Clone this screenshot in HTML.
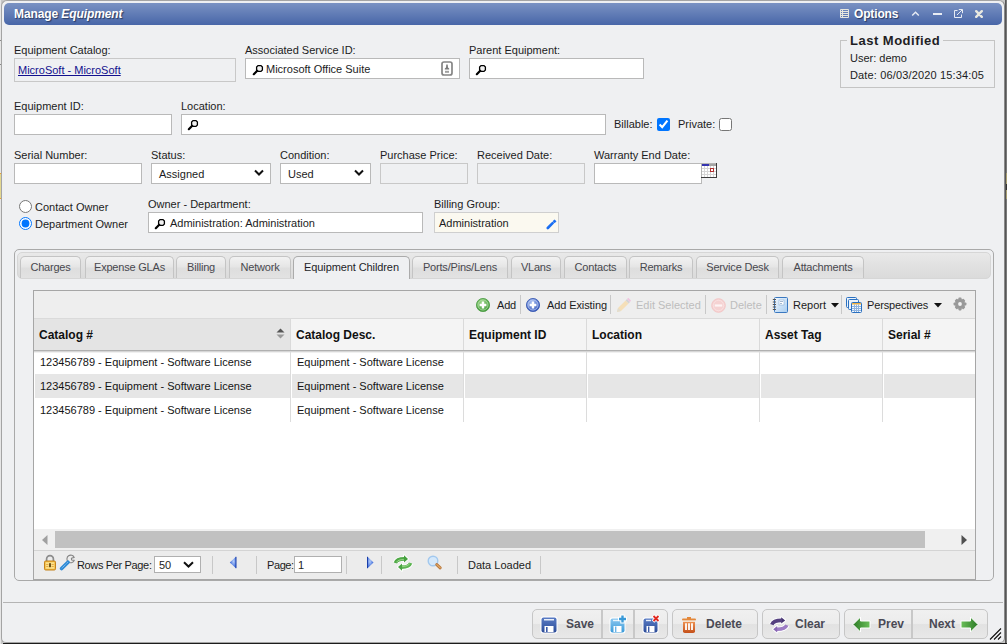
<!DOCTYPE html>
<html><head><meta charset="utf-8">
<style>
*{box-sizing:border-box;margin:0;padding:0}
html,body{width:1007px;height:644px;overflow:hidden;background:#c8c8c8;font-family:"Liberation Sans",sans-serif;font-size:11px;color:#222}
.a{position:absolute}
.t{position:absolute;white-space:nowrap;line-height:13px;font-size:11px;color:#1c1c22}
#win{position:absolute;left:1px;top:0;width:1004px;height:643px;background:#eff0f2;border:1px solid #a4a4a4;border-right-color:#8a8a8a;border-radius:6px 6px 5px 5px}
#hdr{position:absolute;left:4px;top:3px;width:998px;height:22px;border-radius:5px;background:linear-gradient(#7a92c3,#4866a8)}
.inp{position:absolute;background:#fff;border:1px solid #b9b9b9}
.dis{position:absolute;background:#eff0f2;border:1px solid #c8c8c8}
.lbl{position:absolute;white-space:nowrap;font-size:11px;line-height:13px;color:#1c1c22}
.tab{position:absolute;top:256px;height:22px;border:1px solid #c4c4c4;border-bottom:none;border-radius:5px 5px 0 0;background:linear-gradient(#f2f2f2,#e6e6e6 45%,#dedede 55%,#e2e2e2);color:#48484e;font-size:11px;line-height:13px;text-align:center;padding-top:4px;white-space:nowrap;letter-spacing:-0.2px}
.tab.act{background:#eff0f2;border-color:#ababab;color:#1e1e28;height:23px;z-index:2;letter-spacing:-0.1px}
.col{position:absolute;top:319px;height:31px;border-left:1px solid #dadada}
.hd{position:absolute;top:328px;font-weight:bold;font-size:12px;line-height:14px;color:#111;white-space:nowrap}
.cell{position:absolute;font-size:11px;line-height:13px;color:#141414;white-space:nowrap}
.sep{position:absolute;width:1px;background:#c8c8c8}
.btn{position:absolute;top:609px;height:30px;border:1px solid #c6c6c6;border-radius:5px;background:linear-gradient(#f0f0f0,#ececec 48%,#e2e2e2 52%,#e8e8e8)}
.bt{position:absolute;top:617px;font-weight:bold;font-size:12px;line-height:14px;color:#4a4a55;white-space:nowrap}
</style></head><body>
<!-- right dark outside strip -->
<div class="a" style="left:1005px;top:0;width:1px;height:644px;background:#565656"></div><div class="a" style="left:1006px;top:0;width:1px;height:644px;background:#7a7a7a"></div><div class="a" style="left:1006px;top:173px;width:1px;height:26px;background:#a89e70"></div><div class="a" style="left:1006px;top:184px;width:1px;height:6px;background:#333"></div>
<div class="a" style="left:0;top:0;width:1px;height:644px;background:#e6e6e6"></div><div class="a" style="left:0;top:173px;width:1px;height:26px;background:#e4d890"></div><div class="a" style="left:0;top:173px;width:1px;height:1px;background:#f0a030"></div><div class="a" style="left:0;top:198px;width:1px;height:1px;background:#f0a030"></div><div class="a" style="left:0;top:40px;width:1px;height:1px;background:#888"></div><div class="a" style="left:0;top:64px;width:1px;height:1px;background:#888"></div>
<div id="win">
</div>
<div class="a" style="left:3px;top:643px;width:1004px;height:1px;background:#1c1c1c"></div>
<div id="hdr"></div>
<div class="a" style="left:14px;top:6px;font-size:12px;font-weight:bold;color:#fff;line-height:16px;text-shadow:1px 1px 1px #2a3a60;white-space:nowrap;letter-spacing:-0.1px">Manage <i>Equipment</i></div>

<!-- header right icons -->
<svg class="a" style="left:840px;top:9px" width="9" height="9" viewBox="0 0 9 9"><path d="M0.5 0.5H8.5V8.5H0.5Z M0.5 2.5H8.5M0.5 4.5H8.5M0.5 6.5H8.5M2.5 0.5V8.5" fill="none" stroke="#e6e6de" stroke-width="1"/></svg>
<div class="a" style="left:854px;top:6px;font-size:12px;font-weight:bold;color:#fff;line-height:16px;text-shadow:1px 1px 1px #2a3a60;letter-spacing:-0.15px">Options</div>
<svg class="a" style="left:911px;top:10px" width="9" height="7" viewBox="0 0 9 7"><path d="M1.2 5.5L4.5 2.2L7.8 5.5" fill="none" stroke="#e8ecf4" stroke-width="1.4"/></svg>
<div class="a" style="left:933px;top:13px;width:9px;height:2px;background:#e8ecf4"></div>
<svg class="a" style="left:954px;top:9px" width="9" height="9" viewBox="0 0 9 9"><path d="M3.5 1.5H0.5V8.5H7.5V5.5" fill="none" stroke="#e8ecf4" stroke-width="1"/><path d="M3 6L8 1M4.8 0.5H8.5V4.2" fill="none" stroke="#e8ecf4" stroke-width="1"/></svg>
<svg class="a" style="left:975px;top:10px" width="8" height="8" viewBox="0 0 8 8"><path d="M1.2 1.2L6.8 6.8M6.8 1.2L1.2 6.8" stroke="#e8e8e0" stroke-width="2.4" stroke-linecap="round"/></svg>

<!-- Row 1 -->
<div class="lbl" style="left:14px;top:44px">Equipment Catalog:</div>
<div class="dis" style="left:14px;top:58px;width:222px;height:24px"></div>
<div class="lbl" style="left:18px;top:64px;color:#12108e;text-decoration:underline">MicroSoft - MicroSoft</div>
<div class="lbl" style="left:245px;top:44px">Associated Service ID:</div>
<div class="inp" style="left:245px;top:58px;width:215px;height:21px"></div>
<div class="lbl" style="left:469px;top:44px">Parent Equipment:</div>
<div class="inp" style="left:469px;top:58px;width:175px;height:21px"></div>

<!-- Last Modified -->
<div class="a" style="left:840px;top:40px;width:155px;height:48px;border:1px solid #c4c4c4"></div>
<div class="a" style="left:847px;top:33px;width:96px;height:14px;background:#eff0f2"></div>
<div class="a" style="left:850px;top:33px;font-size:13px;font-weight:bold;line-height:15px;color:#1e1e24;white-space:nowrap;letter-spacing:0.5px">Last Modified</div>
<div class="lbl" style="left:850px;top:52px">User: demo</div>
<div class="lbl" style="left:850px;top:69px;letter-spacing:0.15px">Date: 06/03/2020 15:34:05</div>

<!-- Row 2 -->
<div class="lbl" style="left:14px;top:100px">Equipment ID:</div>
<div class="inp" style="left:14px;top:114px;width:158px;height:21px"></div>
<div class="lbl" style="left:181px;top:100px">Location:</div>
<div class="inp" style="left:181px;top:114px;width:425px;height:21px"></div>
<div class="lbl" style="left:614px;top:118px">Billable:</div>
<div class="lbl" style="left:678px;top:118px">Private:</div>

<!-- Row 3 -->
<div class="lbl" style="left:14px;top:149px">Serial Number:</div>
<div class="inp" style="left:14px;top:163px;width:128px;height:21px"></div>
<div class="lbl" style="left:151px;top:149px">Status:</div>
<div class="inp" style="left:151px;top:163px;width:120px;height:21px"></div>
<div class="lbl" style="left:159px;top:168px">Assigned</div>
<div class="lbl" style="left:280px;top:149px">Condition:</div>
<div class="inp" style="left:280px;top:163px;width:91px;height:21px"></div>
<div class="lbl" style="left:288px;top:168px">Used</div>
<div class="lbl" style="left:380px;top:149px">Purchase Price:</div>
<div class="dis" style="left:380px;top:163px;width:88px;height:21px"></div>
<div class="lbl" style="left:477px;top:149px">Received Date:</div>
<div class="dis" style="left:477px;top:163px;width:108px;height:21px"></div>
<div class="lbl" style="left:594px;top:149px">Warranty End Date:</div>
<div class="inp" style="left:594px;top:163px;width:108px;height:21px"></div>

<!-- Row 4 -->
<div class="lbl" style="left:35px;top:201px">Contact Owner</div>
<div class="lbl" style="left:35px;top:218px">Department Owner</div>
<div class="lbl" style="left:148px;top:198px">Owner - Department:</div>
<div class="inp" style="left:148px;top:212px;width:275px;height:21px"></div>
<div class="lbl" style="left:170px;top:217px">Administration: Administration</div>
<div class="lbl" style="left:434px;top:198px">Billing Group:</div>
<div class="a" style="left:434px;top:212px;width:125px;height:21px;background:#fbf9f0;border:1px solid #cfcfcf"></div>
<div class="lbl" style="left:439px;top:217px">Administration</div>


<!-- form icons -->
<svg class="a" style="left:252px;top:61px" width="12" height="15" viewBox="0 0 12 15"><path d="M6 4.6H9L10.4 6V9L9 10.4H6L4.6 9V6Z" fill="#f2f2f2" stroke="#000" stroke-width="1.3"/><path d="M5.2 9.8L1.8 13.2" stroke="#000" stroke-width="2.2" stroke-linecap="round"/></svg>
<div class="lbl" style="left:266px;top:63px;color:#1c1c24">Microsoft Office Suite</div>
<svg class="a" style="left:441px;top:61px" width="12" height="15" viewBox="0 0 12 15"><rect x="1" y="1" width="10" height="13" rx="2" fill="#fff" stroke="#858585" stroke-width="1.7"/><path d="M5.3 3.6H6.7L7 6.5L8.2 7.6V8.4H3.8V7.6L5 6.5Z" fill="#7a7a7a"/><rect x="4" y="9.8" width="4" height="2" fill="#a0a0a0"/></svg>
<svg class="a" style="left:475px;top:61px" width="12" height="15" viewBox="0 0 12 15"><path d="M6 4.6H9L10.4 6V9L9 10.4H6L4.6 9V6Z" fill="#f2f2f2" stroke="#000" stroke-width="1.3"/><path d="M5.2 9.8L1.8 13.2" stroke="#000" stroke-width="2.2" stroke-linecap="round"/></svg>
<svg class="a" style="left:187px;top:116px" width="12" height="15" viewBox="0 0 12 15"><path d="M6 4.6H9L10.4 6V9L9 10.4H6L4.6 9V6Z" fill="#f2f2f2" stroke="#000" stroke-width="1.3"/><path d="M5.2 9.8L1.8 13.2" stroke="#000" stroke-width="2.2" stroke-linecap="round"/></svg>
<svg class="a" style="left:154px;top:215px" width="12" height="15" viewBox="0 0 12 15"><path d="M6 4.6H9L10.4 6V9L9 10.4H6L4.6 9V6Z" fill="#f2f2f2" stroke="#000" stroke-width="1.3"/><path d="M5.2 9.8L1.8 13.2" stroke="#000" stroke-width="2.2" stroke-linecap="round"/></svg>
<input type="checkbox" checked class="a" style="left:657px;top:118px;width:13px;height:13px;margin:0">
<input type="checkbox" class="a" style="left:719px;top:118px;width:13px;height:13px;margin:0">
<input type="radio" name="r" class="a" style="left:19px;top:200px;width:13px;height:13px;margin:0">
<input type="radio" name="r" checked class="a" style="left:19px;top:217px;width:13px;height:13px;margin:0">
<svg class="a" style="left:254px;top:169px" width="10" height="8" viewBox="0 0 10 8"><path d="M1 1.5L5 5.5L9 1.5" fill="none" stroke="#111" stroke-width="2"/></svg>
<svg class="a" style="left:354px;top:169px" width="10" height="8" viewBox="0 0 10 8"><path d="M1 1.5L5 5.5L9 1.5" fill="none" stroke="#111" stroke-width="2"/></svg>
<svg class="a" style="left:701px;top:163px" width="16" height="15" viewBox="0 0 16 15" shape-rendering="crispEdges"><rect x="0" y="0" width="16" height="15" fill="#fff"/><path d="M3.5 3V14M6.5 3V14M9.5 3V14M12.5 3V14M1 5.5H15M1 8.5H15M1 11.5H15" stroke="#d6d6d6" stroke-width="1"/><rect x="0" y="0" width="16" height="1" fill="#b4b4b4"/><rect x="0" y="0" width="1" height="15" fill="#b4b4b4"/><rect x="1" y="1" width="7" height="2" fill="#3434b0"/><rect x="8" y="1" width="7" height="2" fill="#a4a4a4"/><path d="M9.5 5.5H12.5V8.5H9.5Z" fill="#fff" stroke="#b03030" stroke-width="1"/><rect x="15" y="0" width="1" height="15" fill="#3c3c3c"/><rect x="0" y="14" width="16" height="1" fill="#3c3c3c"/></svg>
<svg class="a" style="left:546px;top:219px" width="11" height="11" viewBox="0 0 11 11"><path d="M1.8 9L6.6 4.2" stroke="#1a6ef2" stroke-width="2.6" stroke-linecap="round"/><path d="M8.5 0.4L10.5 2.3L8.6 4.2L6.6 2.3Z" fill="#1a6ef2"/></svg>

<!-- tab panel -->
<div class="a" style="left:14px;top:249px;width:980px;height:332px;border:1px solid #a9a9a9;border-radius:5px"></div>
<div class="a" style="left:17px;top:252px;width:974px;height:27px;border:1px solid #d6d6d6;border-radius:5px;background:linear-gradient(#e9e9e9,#e1e1e1 50%,#dbdbdb)"></div>


<!-- tabs -->
<div class="tab" style="left:20px;width:61px">Charges</div>
<div class="tab" style="left:85px;width:89px">Expense GLAs</div>
<div class="tab" style="left:176px;width:50px">Billing</div>
<div class="tab" style="left:229px;width:62px">Network</div>
<div class="tab act" style="left:293px;width:117px">Equipment Children</div>
<div class="tab" style="left:412px;width:96px">Ports/Pins/Lens</div>
<div class="tab" style="left:511px;width:50px">VLans</div>
<div class="tab" style="left:564px;width:63px">Contacts</div>
<div class="tab" style="left:629px;width:64px">Remarks</div>
<div class="tab" style="left:696px;width:83px">Service Desk</div>
<div class="tab" style="left:782px;width:82px">Attachments</div>

<!-- grid -->
<div class="a" style="left:33px;top:290px;width:943px;height:290px;border:1px solid #a6a6a6;background:#fff"></div>
<div class="a" style="left:34px;top:291px;width:941px;height:27px;background:#eeeeee"></div>
<div class="a" style="left:34px;top:318px;width:941px;height:1px;background:#dadada"></div>
<div class="a" style="left:34px;top:319px;width:941px;height:31px;background:#f4f4f4"></div>
<div class="a" style="left:34px;top:319px;width:256px;height:31px;background:#e4e4e4"></div>
<div class="a" style="left:34px;top:350px;width:941px;height:1px;background:#b0b0b0"></div><div class="a" style="left:34px;top:351px;width:941px;height:1px;background:#d6d6d6"></div><div class="a" style="left:34px;top:352px;width:941px;height:1px;background:#f0f0f0"></div>
<div class="a" style="left:35px;top:374px;width:940px;height:24px;background:#e6e6e6"></div>

<!-- scroll + paging -->
<div class="a" style="left:34px;top:529px;width:941px;height:21px;background:#f0f0f0"></div>
<div class="a" style="left:55px;top:531px;width:870px;height:17px;background:#c1c1c1"></div>
<div class="a" style="left:34px;top:550px;width:941px;height:1px;background:#d4d4d4"></div>
<div class="a" style="left:34px;top:551px;width:941px;height:28px;background:#ececec"></div>


<!-- grid content -->
<div class="a" style="left:290px;top:319px;width:1px;height:31px;background:#dadada"></div>
<div class="a" style="left:463px;top:319px;width:1px;height:31px;background:#dadada"></div>
<div class="a" style="left:586px;top:319px;width:1px;height:31px;background:#dadada"></div>
<div class="a" style="left:759px;top:319px;width:1px;height:31px;background:#dadada"></div>
<div class="a" style="left:882px;top:319px;width:1px;height:31px;background:#dadada"></div>
<div class="a" style="left:290px;top:352px;width:1px;height:70px;background:#dcdcdc"></div>
<div class="a" style="left:463px;top:352px;width:1px;height:70px;background:#dcdcdc"></div>
<div class="a" style="left:586px;top:352px;width:1px;height:70px;background:#dcdcdc"></div>
<div class="a" style="left:759px;top:352px;width:1px;height:70px;background:#dcdcdc"></div>
<div class="a" style="left:882px;top:352px;width:1px;height:70px;background:#dcdcdc"></div>
<div class="a" style="left:291px;top:374px;width:1px;height:24px;background:#fff"></div>
<div class="a" style="left:464px;top:374px;width:1px;height:24px;background:#fff"></div>
<div class="a" style="left:587px;top:374px;width:1px;height:24px;background:#fff"></div>
<div class="a" style="left:760px;top:374px;width:1px;height:24px;background:#fff"></div>
<div class="a" style="left:883px;top:374px;width:1px;height:24px;background:#fff"></div>
<div class="hd" style="left:39px">Catalog #</div>
<div class="hd" style="left:296px">Catalog Desc.</div>
<div class="hd" style="left:469px">Equipment ID</div>
<div class="hd" style="left:592px">Location</div>
<div class="hd" style="left:765px">Asset Tag</div>
<div class="hd" style="left:888px">Serial #</div>
<svg class="a" style="left:276px;top:328px" width="9" height="11" viewBox="0 0 9 11"><path d="M4.5 0.5L8.5 4.5H0.5Z" fill="#555"/><path d="M4.5 10.5L8.5 6.5H0.5Z" fill="#999"/></svg>
<div class="cell" style="left:40px;top:356px">123456789 - Equipment - Software License</div>
<div class="cell" style="left:297px;top:356px">Equipment - Software License</div>
<div class="cell" style="left:40px;top:380px">123456789 - Equipment - Software License</div>
<div class="cell" style="left:297px;top:380px">Equipment - Software License</div>
<div class="cell" style="left:40px;top:404px">123456789 - Equipment - Software License</div>
<div class="cell" style="left:297px;top:404px">Equipment - Software License</div>

<!-- toolbar -->
<svg class="a" style="left:476px;top:298px" width="14" height="14" viewBox="0 0 14 14"><defs><radialGradient id="gg" cx="0.4" cy="0.3" r="0.75"><stop offset="0" stop-color="#9ad486"/><stop offset="1" stop-color="#3c9636"/></radialGradient></defs><circle cx="7" cy="7" r="6.6" fill="url(#gg)" stroke="#4a9c42" stroke-width="0.8"/><circle cx="7" cy="7" r="5" fill="none" stroke="#c8ecbc" stroke-opacity="0.7" stroke-width="0.9"/><path d="M7 3.6V10.4M3.6 7H10.4" stroke="#fff" stroke-width="2.4"/></svg>
<div class="t" style="left:497px;top:299px;letter-spacing:-0.2px">Add</div>
<div class="sep" style="left:520px;top:295px;height:19px"></div>
<svg class="a" style="left:526px;top:298px" width="14" height="14" viewBox="0 0 14 14"><defs><radialGradient id="bg" cx="0.4" cy="0.3" r="0.75"><stop offset="0" stop-color="#a4bcf0"/><stop offset="1" stop-color="#2f52b8"/></radialGradient></defs><circle cx="7" cy="7" r="6.6" fill="url(#bg)" stroke="#3556b0" stroke-width="0.8"/><circle cx="7" cy="7" r="5" fill="none" stroke="#d4e0fa" stroke-opacity="0.7" stroke-width="0.9"/><path d="M7 3.6V10.4M3.6 7H10.4" stroke="#fff" stroke-width="2.4"/></svg>
<div class="t" style="left:547px;top:299px;letter-spacing:-0.1px">Add Existing</div>
<div class="sep" style="left:610px;top:295px;height:19px"></div>
<svg class="a" style="left:616px;top:297px" width="15" height="16" viewBox="0 0 15 16"><path d="M1 15L2 11L9.6 3.4L12.6 6.4L5 14Z" fill="#f5dfb8"/><path d="M9.6 3.4L11 2L14 5L12.6 6.4Z" fill="#d4d4d4"/><path d="M11 2L12.3 0.7L15 3.4L14 5Z" fill="#f0c4e0"/><path d="M1 15L2 11L5 14Z" fill="#e0ddd0"/></svg>
<div class="t" style="left:636px;top:299px;color:#bdbdbd">Edit Selected</div>
<div class="sep" style="left:705px;top:295px;height:19px"></div>
<svg class="a" style="left:711px;top:298px" width="15" height="15" viewBox="0 0 15 15"><circle cx="7.5" cy="7.5" r="6.8" fill="#f5d2d2" stroke="#f3c6c6" stroke-width="1"/><circle cx="7.5" cy="7.5" r="5.2" fill="none" stroke="#f9e2e2" stroke-width="0.8"/><rect x="3.8" y="6.4" width="7.4" height="2.2" fill="#fdf4f4"/></svg>
<div class="t" style="left:730px;top:299px;color:#bdbdbd">Delete</div>
<div class="sep" style="left:766px;top:295px;height:19px"></div>
<svg class="a" style="left:772px;top:297px" width="16" height="16" viewBox="0 0 16 16"><defs><linearGradient id="rg" x1="0" y1="0" x2="1" y2="1"><stop offset="0" stop-color="#f2f8fe"/><stop offset="1" stop-color="#a8cdf0"/></linearGradient></defs><rect x="2.5" y="0.5" width="13" height="15" rx="1" fill="url(#rg)" stroke="#3a78c0"/><rect x="7" y="3" width="5" height="5" fill="#fff" stroke="#8ab0d8" stroke-width="0.6"/><path d="M8 4.5h3M8 6.5h2" stroke="#6a8ab0" stroke-width="0.6"/><path d="M0.8 2.5h3.2M0.8 5h3.2M0.8 7.5h3.2M0.8 10h3.2M0.8 12.5h3.2" stroke="#555" stroke-width="1"/></svg>
<div class="t" style="left:793px;top:299px">Report</div>
<svg class="a" style="left:831px;top:303px" width="8" height="5" viewBox="0 0 8 5"><path d="M0 0H8L4 4.5Z" fill="#111"/></svg>
<div class="sep" style="left:841px;top:295px;height:19px"></div>
<svg class="a" style="left:846px;top:297px" width="16" height="16" viewBox="0 0 16 16"><rect x="0.5" y="0.5" width="10" height="10" rx="1" fill="#eaf2fb" stroke="#2a70c0"/><rect x="2.5" y="2.5" width="10" height="10" rx="1" fill="#eaf2fb" stroke="#2a70c0"/><rect x="5.5" y="5.5" width="10" height="10" rx="1" fill="#f4f8fd" stroke="#2a70c0"/><rect x="6" y="6" width="9" height="1.5" fill="#f0b040"/><path d="M6 9.5h9M6 11.5h9M6 13.5h9M8.5 7.5v7.5M10.5 7.5v7.5M12.5 7.5v7.5" stroke="#8fb4e0" stroke-width="1"/></svg>
<div class="t" style="left:867px;top:299px;letter-spacing:-0.15px">Perspectives</div>
<svg class="a" style="left:934px;top:303px" width="8" height="5" viewBox="0 0 8 5"><path d="M0 0H8L4 4.5Z" fill="#111"/></svg>
<svg class="a" style="left:953px;top:297px" width="14" height="14" viewBox="0 0 14 14"><g fill="#999"><circle cx="7" cy="7" r="4.9"/><rect x="5.4" y="0.6" width="3.2" height="12.8" rx="0.8"/><rect x="0.6" y="5.4" width="12.8" height="3.2" rx="0.8"/><rect x="5.4" y="0.9" width="3.2" height="12.2" rx="0.8" transform="rotate(45 7 7)"/><rect x="5.4" y="0.9" width="3.2" height="12.2" rx="0.8" transform="rotate(-45 7 7)"/></g><circle cx="7" cy="7" r="1.9" fill="#f2f2f2"/></svg>

<!-- scroll arrows -->
<svg class="a" style="left:42px;top:535px" width="6" height="10" viewBox="0 0 6 10"><path d="M5.5 0V10L0 5Z" fill="#a0a0a0"/></svg>
<svg class="a" style="left:961px;top:535px" width="6" height="10" viewBox="0 0 6 10"><path d="M0.5 0V10L6 5Z" fill="#505050"/></svg>

<!-- paging -->
<svg class="a" style="left:43px;top:554px" width="14" height="17" viewBox="0 0 14 17"><path d="M3.6 7.5V5A3.4 3.4 0 0 1 10.4 5V7.5" fill="none" stroke="#8c8c8c" stroke-width="1.7"/><rect x="1.5" y="7" width="11" height="9" rx="1.2" fill="#f2b838" stroke="#c4821a"/><rect x="2.6" y="8.2" width="8.8" height="6.6" fill="#fbe08a"/><path d="M3.2 10.5h2.2M8.6 10.5h2.2M3.2 12.5h2.2M8.6 12.5h2.2" stroke="#e4a43a" stroke-width="0.9"/><rect x="6.2" y="9.2" width="1.6" height="4" fill="#4a3200"/></svg>
<svg class="a" style="left:59px;top:554px" width="16" height="17" viewBox="0 0 16 17"><path d="M9 7.6A3.8 3.8 0 1 1 15.2 3.4L12.4 4.2L12.6 6L15.3 6.4A3.8 3.8 0 0 1 9 7.6Z" fill="#ececec" stroke="#858585" stroke-width="1.1" stroke-linejoin="round"/><path d="M2.6 14.6L9 8.2" stroke="#2e8ad6" stroke-width="3.6" stroke-linecap="round"/><path d="M2.8 14.2L8.6 8.4" stroke="#a8d8fa" stroke-width="0.9" stroke-dasharray="1 0.8"/></svg>
<div class="t" style="left:77px;top:559px;letter-spacing:-0.35px">Rows Per Page:</div>
<div class="inp" style="left:154px;top:556px;width:47px;height:17px;border-color:#b0b0b0"></div>
<div class="t" style="left:159px;top:559px">50</div>
<svg class="a" style="left:183px;top:561px" width="11" height="7" viewBox="0 0 11 7"><path d="M1 1.2L5.5 5.5L10 1.2" fill="none" stroke="#111" stroke-width="2"/></svg>
<div class="sep" style="left:212px;top:556px;height:18px"></div>
<svg class="a" style="left:229px;top:556px" width="8" height="13" viewBox="0 0 8 13"><defs><radialGradient id="tri" cx="0.6" cy="0.4" r="0.7"><stop offset="0" stop-color="#b4cdfa"/><stop offset="1" stop-color="#1c4ed0"/></radialGradient></defs><path d="M7 0.8V12.2L0.8 6.5Z" fill="url(#tri)"/><path d="M7 0.8V12.2" stroke="#1a3ea8" stroke-width="1"/></svg>
<div class="sep" style="left:256px;top:556px;height:18px"></div>
<div class="t" style="left:267px;top:559px;letter-spacing:-0.4px">Page:</div>
<div class="inp" style="left:294px;top:556px;width:48px;height:17px;border-color:#b0b0b0"></div>
<div class="t" style="left:298px;top:559px">1</div>
<div class="sep" style="left:346px;top:556px;height:18px"></div>
<svg class="a" style="left:366px;top:556px" width="8" height="13" viewBox="0 0 8 13"><defs><radialGradient id="tri2" cx="0.4" cy="0.4" r="0.7"><stop offset="0" stop-color="#b4cdfa"/><stop offset="1" stop-color="#1c4ed0"/></radialGradient></defs><path d="M1.5 0.8V12.2L7.5 6.5Z" fill="url(#tri2)"/><path d="M1.5 0.8V12.2" stroke="#1a3ea8" stroke-width="1"/></svg>
<div class="sep" style="left:381px;top:556px;height:18px"></div>
<svg class="a" style="left:393px;top:552px" width="20" height="20" viewBox="0 0 20 20"><defs><linearGradient id="rf" x1="0" y1="0" x2="0" y2="1"><stop offset="0" stop-color="#8ed27c"/><stop offset="1" stop-color="#3c9a38"/></linearGradient></defs><g stroke="#fff" stroke-linejoin="round"><path d="M2.4 11Q3.8 6.9 11.4 6.9" fill="none" stroke-width="5.4"/><path d="M11 3.2L15 6.9L11 10.6Z" fill="#fff" stroke-width="1.8"/><path d="M17.6 11Q16.2 15.1 8.6 15.1" fill="none" stroke-width="5.4"/><path d="M9 11.4L5 15.1L9 18.8Z" fill="#fff" stroke-width="1.8"/></g><path d="M2.4 11Q3.8 6.9 11.4 6.9" fill="none" stroke="#4fa846" stroke-width="3.6"/><path d="M11 3.2L15 6.9L11 10.6Z" fill="#45a03e"/><path d="M17.6 11Q16.2 15.1 8.6 15.1" fill="none" stroke="#5cb452" stroke-width="3.6"/><path d="M9 11.4L5 15.1L9 18.8Z" fill="#4aa444"/><path d="M3.6 10.2Q4.8 7.6 10.8 7.6" fill="none" stroke="#a4dc94" stroke-width="0.9"/><path d="M16.6 11.6Q15.6 14.2 9.2 14.4" fill="none" stroke="#a4dc94" stroke-width="0.9"/></svg>
<svg class="a" style="left:427px;top:555px" width="16" height="15" viewBox="0 0 16 15"><circle cx="6" cy="6" r="4.8" fill="#d4e8fb" stroke="#a2c8ee" stroke-width="1.4"/><path d="M9.8 9.6L13.2 12.8" stroke="#b8763a" stroke-width="3" stroke-linecap="round"/><path d="M9.8 9.6L13.2 12.8" stroke="#e0a868" stroke-width="1.2" stroke-linecap="round"/></svg>
<div class="sep" style="left:457px;top:556px;height:18px"></div>
<div class="t" style="left:468px;top:559px">Data Loaded</div>
<div class="sep" style="left:540px;top:556px;height:18px"></div>

<!-- bottom -->
<div class="a" style="left:3px;top:602px;width:1000px;height:1px;background:#b4b4b4"></div>

<!-- buttons -->
<div class="btn" style="left:532px;width:136px"></div>
<div class="a" style="left:601px;top:610px;width:2px;height:28px;background:#c8c8c8"></div>
<div class="a" style="left:633px;top:610px;width:2px;height:28px;background:#c8c8c8"></div>
<svg class="a" style="left:540px;top:616px" width="18" height="18" viewBox="0 0 18 18"><defs><linearGradient id="fb" x1="0" y1="0" x2="0" y2="1"><stop offset="0" stop-color="#5a7cc4"/><stop offset="1" stop-color="#2c4c98"/></linearGradient><linearGradient id="fl" x1="0" y1="0" x2="0" y2="1"><stop offset="0" stop-color="#8cc8f0"/><stop offset="1" stop-color="#3a9ad8"/></linearGradient></defs><rect x="0.5" y="0.5" width="17" height="17" rx="2.5" fill="#fff"/><rect x="1.5" y="1.5" width="15" height="15" rx="2" fill="url(#fb)"/><rect x="4" y="3" width="10" height="1.5" fill="#e8eef8"/><rect x="4.5" y="10" width="9" height="6" fill="#fff"/><rect x="6" y="11" width="1.6" height="5" fill="#3a5aa8"/></svg>
<div class="bt" style="left:566px">Save</div>
<svg class="a" style="left:609px;top:614px" width="19" height="20" viewBox="0 0 19 20"><rect x="0.5" y="3.5" width="16" height="16" rx="2.5" fill="#fff"/><rect x="1.5" y="4.5" width="14" height="14" rx="2" fill="url(#fl)"/><rect x="4" y="5.8" width="5" height="1.4" fill="#e8f4fc"/><rect x="4.5" y="12" width="8" height="6" fill="#fff"/><rect x="6" y="12.5" width="1.4" height="5.5" fill="#6ab4e8"/><path d="M13.5 0.5V9.5M9 5H18" stroke="#fff" stroke-width="4.4"/><path d="M13.5 1.5V8.5M10 5H17" stroke="#3a9ad8" stroke-width="2.4"/></svg>
<svg class="a" style="left:642px;top:614px" width="19" height="20" viewBox="0 0 19 20"><rect x="0.5" y="3.5" width="16" height="16" rx="2.5" fill="#fff"/><rect x="1.5" y="4.5" width="14" height="14" rx="2" fill="url(#fb)"/><rect x="4" y="5.8" width="5" height="1.4" fill="#e8eef8"/><rect x="4.5" y="12" width="8" height="6" fill="#fff"/><rect x="6" y="12.5" width="1.4" height="5.5" fill="#3a5aa8"/><path d="M11 1.5L17 7.5M17 1.5L11 7.5" stroke="#fff" stroke-width="3.6"/><path d="M11.5 2L16.5 7M16.5 2L11.5 7" stroke="#e02820" stroke-width="1.8"/></svg>
<div class="btn" style="left:672px;width:86px"></div>
<svg class="a" style="left:681px;top:616px" width="16" height="18" viewBox="0 0 16 18"><defs><linearGradient id="tg" x1="0" y1="0" x2="0" y2="1"><stop offset="0" stop-color="#ec9050"/><stop offset="1" stop-color="#c4501a"/></linearGradient></defs><rect x="6" y="1" width="4" height="2" fill="#e4883a"/><rect x="1" y="2.6" width="14" height="2" rx="1" fill="#e4883a"/><rect x="2" y="4.6" width="12" height="1.2" fill="#f6dcc4"/><path d="M2 6H14V15.2Q14 17 12.2 17H3.8Q2 17 2 15.2Z" fill="url(#tg)"/><path d="M5 7.2V14M8 7.2V14M11 7.2V14" stroke="#fff" stroke-width="1.8"/></svg>
<div class="bt" style="left:706px">Delete</div>
<div class="btn" style="left:762px;width:78px"></div>
<svg class="a" style="left:769px;top:615px" width="20" height="20" viewBox="0 0 20 20"><g stroke="#fff" stroke-linejoin="round"><path d="M2.8 9.6Q4.4 5.4 12.6 5.4" fill="none" stroke-width="5.6"/><path d="M12.2 2.2L16.2 5.4L12.2 8.6Z" fill="#fff" stroke-width="2"/><path d="M17.8 10.2Q16.2 14.3 8 14.3" fill="none" stroke-width="5.6"/><path d="M8.2 11.1L4.2 14.3L8.2 17.5Z" fill="#fff" stroke-width="2"/></g><path d="M2.8 9.6Q4.4 5.4 12.6 5.4" fill="none" stroke="#55407f" stroke-width="3.6"/><path d="M12.2 2.2L16.2 5.4L12.2 8.6Z" fill="#463472"/><path d="M17.8 10.2Q16.2 14.3 8 14.3" fill="none" stroke="#9c7cc4" stroke-width="3.6"/><path d="M8.2 11.1L4.2 14.3L8.2 17.5Z" fill="#8a68b4"/></svg>
<div class="bt" style="left:795px">Clear</div>
<div class="btn" style="left:844px;width:144px"></div>
<div class="a" style="left:911px;top:610px;width:2px;height:28px;background:#c8c8c8"></div>
<svg class="a" style="left:852px;top:616px" width="19" height="17" viewBox="0 0 19 17"><defs><linearGradient id="ag" x1="0" y1="0" x2="1" y2="0"><stop offset="0" stop-color="#2c7a26"/><stop offset="1" stop-color="#6cc05a"/></linearGradient><linearGradient id="ag2" x1="1" y1="0" x2="0" y2="0"><stop offset="0" stop-color="#2c7a26"/><stop offset="1" stop-color="#6cc05a"/></linearGradient></defs><path d="M1 8.5L8.5 1V5H18V12H8.5V16Z" fill="url(#ag)" stroke="#fff" stroke-width="1" stroke-linejoin="round"/></svg>
<div class="bt" style="left:878px">Prev</div>
<div class="bt" style="left:929px">Next</div>
<svg class="a" style="left:960px;top:616px" width="19" height="17" viewBox="0 0 19 17"><path d="M18 8.5L10.5 1V5H1V12H10.5V16Z" fill="url(#ag2)" stroke="#fff" stroke-width="1" stroke-linejoin="round"/></svg>
<svg class="a" style="left:989px;top:628px" width="13" height="12" viewBox="0 0 13 12"><path d="M1 11.5L12 0.5M5 11.5L12 4.5M9 11.5L12 8.5" stroke="#111" stroke-width="1.1"/></svg>

</body></html>
